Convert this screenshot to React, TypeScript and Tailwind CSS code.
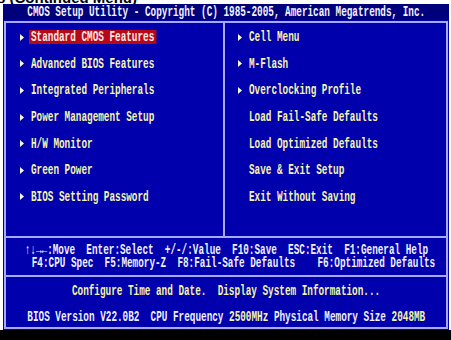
import React from "react";

const mono = "font-['Liberation_Mono',monospace] text-[14px] font-bold leading-[12px] whitespace-pre";

function Arrow({ hidden }: { hidden?: boolean }) {
  return (
    <svg width="4" height="7" viewBox="0 0 4 7" className={hidden ? "invisible shrink-0" : "shrink-0"}>
      <polygon points="0,0 4,3.5 0,7" fill="#f8f8d8" />
    </svg>
  );
}

function Item({ label, arrow = true, selected = false }: { label: string; arrow?: boolean; selected?: boolean }) {
  return (
    <div className="h-[26.6px] flex items-center">
      <Arrow hidden={!arrow} />
      <span
        className={
          selected
            ? `${mono} ml-[5px] inline-block origin-left scale-x-[0.667] px-[3px] py-[1px] bg-[#b80818] text-[#ffe8e8]`
            : `${mono} ml-[5px] inline-block origin-left scale-x-[0.667] px-[3px] py-[1px] text-[#f6f6b0]`
        }
      >
        {label}
      </span>
    </div>
  );
}

export default function App() {
  return (
    <div className="w-[451px] h-[340px] bg-white flex flex-col overflow-hidden">
      <div className="h-[4px] overflow-hidden shrink-0">
        <div className="-mt-[10px] -ml-[3px] font-['Liberation_Sans',sans-serif] font-bold text-[15px] leading-[15px] text-black whitespace-pre">
          s (Continued Menu)
        </div>
      </div>
      <div className="ml-[3px] w-[446px] flex flex-col shrink-0">
        <div className="h-[16px] bg-[#00007c] flex items-center justify-center">
          <span className={`${mono} inline-block origin-center scale-x-[0.667] text-[#f4f4ff]`}>
            CMOS Setup Utility - Copyright (C) 1985-2005, American Megatrends, Inc.
          </span>
        </div>
        <div className="h-[310px] bg-[#0000ac] p-[1px]">
          <div className="h-full border-2 border-[#a8a8ff] flex flex-col">
            <div className="h-[213px] flex">
              <div className="w-[218px] pt-[1px] pl-[14px] flex flex-col">
                <Item label="Standard CMOS Features" selected />
                <Item label="Advanced BIOS Features" />
                <Item label="Integrated Peripherals" />
                <Item label="Power Management Setup" />
                <Item label="H/W Monitor" />
                <Item label="Green Power" />
                <Item label="BIOS Setting Password" />
              </div>
              <div className="w-[2px] bg-[#a8a8ff]" />
              <div className="flex-1 pt-[1px] pl-[13px] flex flex-col">
                <Item label="Cell Menu" />
                <Item label="M-Flash" />
                <Item label="Overclocking Profile" />
                <Item label="Load Fail-Safe Defaults" arrow={false} />
                <Item label="Load Optimized Defaults" arrow={false} />
                <Item label="Save & Exit Setup" arrow={false} />
                <Item label="Exit Without Saving" arrow={false} />
              </div>
            </div>
            <div className="h-[2px] bg-[#a8a8ff]" />
            <div className="h-[37px] flex flex-col justify-center items-center text-[#f0f0ff]">
              <div className="h-[12.5px] flex items-center">
                <span className={`${mono} inline-block origin-center scale-x-[0.667]`}>
                  ↑↓→←:Move  Enter:Select  +/-/:Value  F10:Save  ESC:Exit  F1:General Help
                </span>
              </div>
              <div className="h-[12.5px] flex items-center pl-[14px]">
                <span className={`${mono} inline-block origin-center scale-x-[0.667]`}>
                  F4:CPU Spec  F5:Memory-Z  F8:Fail-Safe Defaults    F6:Optimized Defaults
                </span>
              </div>
            </div>
            <div className="h-[2px] bg-[#a8a8ff]" />
            <div className="flex-1 pt-[5px] flex flex-col items-center">
              <div className="h-[18px] flex items-center">
                <span className={`${mono} inline-block origin-center scale-x-[0.667] text-[#f6f6a8]`}>
                  Configure Time and Date.  Display System Information...
                </span>
              </div>
              <div className="h-[18px] mt-[8px] flex items-center">
                <span className={`${mono} inline-block origin-center scale-x-[0.667] text-[#f0f0ff]`}>
                  BIOS Version V22.0B2  CPU Frequency <span className="text-[#f6f6a8]">2500MHz</span> Physical Memory Size <span className="text-[#f6f6a8]">2048MB</span>
                </span>
              </div>
            </div>
          </div>
        </div>
      </div>
      <div className="flex-1 bg-black" />
    </div>
  );
}
